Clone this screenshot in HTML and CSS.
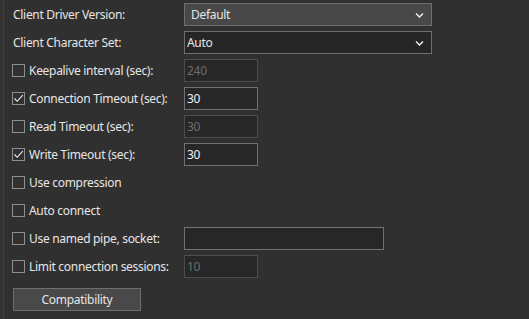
FILE: index.html
```html
<!DOCTYPE html>
<html>
<head>
<meta charset="utf-8">
<link rel="stylesheet" href="styles.css">
</head>
<body>
<div class="edge"></div>
<div class="panel">
  <div class="form">
    <div class="label plain">Client Driver Version:</div>
    <div class="select raised"><span>Default</span><svg class="chev" width="9" height="6" viewBox="0 0 9 6"><path d="M1 1.5 L4.5 5 L8 1.5" fill="none" stroke="#f2f2f2" stroke-width="1.4"/></svg></div>

    <div class="label plain">Client Character Set:</div>
    <div class="select sunken"><span>Auto</span><svg class="chev" width="9" height="6" viewBox="0 0 9 6"><path d="M1 1.5 L4.5 5 L8 1.5" fill="none" stroke="#f2f2f2" stroke-width="1.4"/></svg></div>

    <div class="label"><span class="cb"></span>Keepalive interval (sec):</div>
    <div class="input disabled">240</div>

    <div class="label"><span class="cb"><svg width="11" height="11" viewBox="0 0 11 11"><path d="M1.5 5.5 L4.2 8.3 L9.8 2.2" fill="none" stroke="#f0f0f0" stroke-width="1.1"/></svg></span>Connection Timeout (sec):</div>
    <div class="input">30</div>

    <div class="label"><span class="cb"></span>Read Timeout (sec):</div>
    <div class="input disabled">30</div>

    <div class="label"><span class="cb"><svg width="11" height="11" viewBox="0 0 11 11"><path d="M1.5 5.5 L4.2 8.3 L9.8 2.2" fill="none" stroke="#f0f0f0" stroke-width="1.1"/></svg></span>Write Timeout (sec):</div>
    <div class="input">30</div>

    <div class="label full"><span class="cb"></span>Use compression</div>

    <div class="label full"><span class="cb"></span>Auto connect</div>

    <div class="label"><span class="cb"></span>Use named pipe, socket:</div>
    <div class="input wide"></div>

    <div class="label"><span class="cb"></span>Limit connection sessions:</div>
    <div class="input disabled">10</div>
  </div>
  <button class="btn">Compatibility</button>
</div>
</body>
</html>
```

FILE: styles.css
```css
html, body {
  margin: 0;
  padding: 0;
  background: #303030;
  width: 529px;
  height: 319px;
  overflow: hidden;
  font-family: "Noto Sans", "Open Sans", sans-serif;
  font-size: 12px;
  letter-spacing: -0.3px;
  color: #e6e6e6;
}
body {
  display: flex;
}
.edge {
  width: 3px;
  flex: none;
  background: #333333;
  border-right: 1px solid #404040;
}
.panel {
  padding: 3px 0 0 8px;
  display: flex;
  flex-direction: column;
  align-items: flex-start;
}
.form {
  display: grid;
  grid-template-columns: 172px auto;
  grid-auto-rows: 23px;
  row-gap: 5px;
}
.label {
  display: flex;
  align-items: center;
  grid-column: 1;
  white-space: nowrap;
  line-height: 16px;
  padding-top: 1px;
}
.label.plain {
  padding-left: 1px;
}
.label.full {
  grid-column: 1 / 3;
}
.cb {
  width: 11px;
  height: 11px;
  border: 1px solid #8e8e8e;
  margin-right: 4px;
  margin-top: -1px;
  display: flex;
  align-items: center;
  justify-content: center;
  flex: none;
}
.cb svg { display: block; }
.select {
  grid-column: 2;
  width: 248px;
  box-sizing: border-box;
  height: 23px;
  border: 1px solid #6e6e6e;
  display: flex;
  align-items: center;
  justify-content: space-between;
  padding-right: 7px;
}
.select.raised {
  background: #484848;
  padding-left: 6px;
}
.select.sunken {
  background: #262626;
  padding-left: 2px;
}
.chev { display: block; }
.input {
  grid-column: 2;
  width: 74px;
  box-sizing: border-box;
  height: 23px;
  background: #272727;
  border: 1px solid #717171;
  padding-left: 2px;
  display: flex;
  align-items: center;
  color: #f0f0f0;
}
.input.disabled {
  border-color: #4c4c4c;
  color: #6e6e6e;
}
.input.wide {
  width: 200px;
}
.btn {
  margin-top: 10px;
  margin-left: 1px;
  width: 128px;
  height: 23px;
  background: #494949;
  border: 1px solid #6e6e6e;
  color: #e6e6e6;
  font-family: inherit;
  font-size: 12px;
  letter-spacing: -0.3px;
  padding: 0;
}
```
